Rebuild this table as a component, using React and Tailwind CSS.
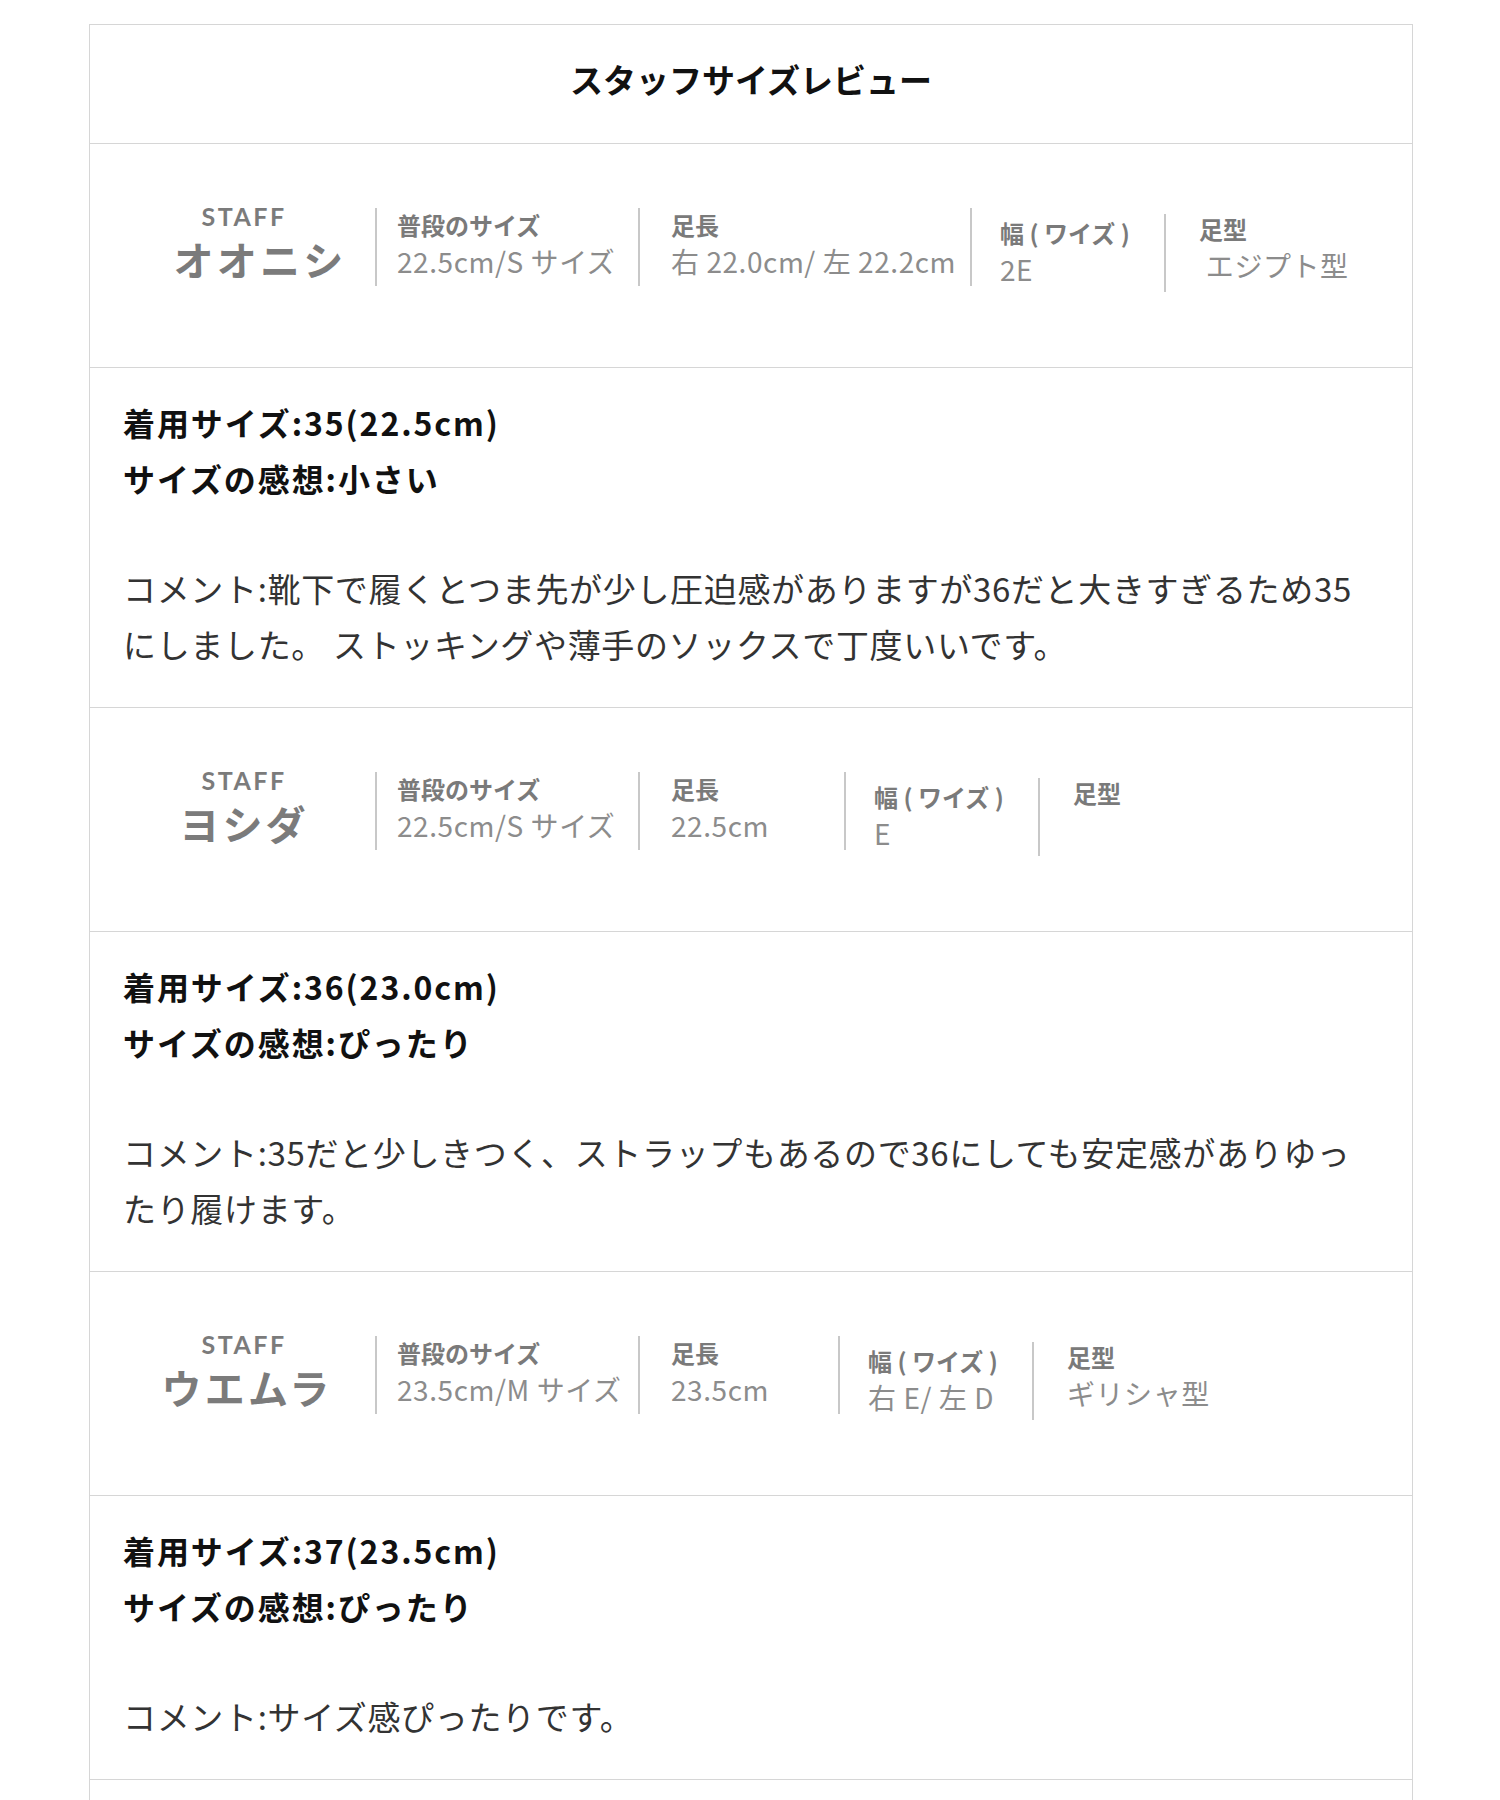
import React from 'react';

const font = { fontFamily: '"Noto Sans CJK JP", "Noto Sans", sans-serif' };

const reviews = [
  {
    name: 'オオニシ',
    nameShift: 'ml-[32px]',
    usual: '22.5cm/S サイズ',
    length: '右 22.0cm/ 左 22.2cm',
    lengthWidth: 'w-[332px]',
    width: '2E',
    shape: ' エジプト型',
    wear: '着用サイズ:35(22.5cm)',
    feel: 'サイズの感想:小さい',
    comment: 'コメント:靴下で履くとつま先が少し圧迫感がありますが36だと大きすぎるため35にしました。 ストッキングや薄手のソックスで丁度いいです。',
  },
  {
    name: 'ヨシダ',
    nameShift: '',
    usual: '22.5cm/S サイズ',
    length: '22.5cm',
    lengthWidth: 'w-[206px]',
    width: 'E',
    shape: '',
    wear: '着用サイズ:36(23.0cm)',
    feel: 'サイズの感想:ぴったり',
    comment: 'コメント:35だと少しきつく、ストラップもあるので36にしても安定感がありゆったり履けます。',
  },
  {
    name: 'ウエムラ',
    nameShift: 'ml-[6px]',
    usual: '23.5cm/M サイズ',
    length: '23.5cm',
    lengthWidth: 'w-[200px]',
    width: '右 E/ 左 D',
    shape: 'ギリシャ型',
    wear: '着用サイズ:37(23.5cm)',
    feel: 'サイズの感想:ぴったり',
    comment: 'コメント:サイズ感ぴったりです。',
  },
];

function Cell({ label, value, className, textClass }) {
  return (
    <div className={`h-[78px] border-l-2 border-[#c8c8c8] shrink-0 ${className}`}>
      <div className={textClass}>
        <div className="text-[24px] leading-[30px] font-bold text-[#7a7a7a] whitespace-nowrap">{label}</div>
        <div className="text-[28px] leading-[36px] mt-[3px] tracking-[0.02em] text-[#8c8c8c] whitespace-pre">{value}</div>
      </div>
    </div>
  );
}

function StaffRow({ r }) {
  return (
    <div className="flex items-start h-[224px] border-b border-[#d6d6d6]">
      <div className="w-[285px] shrink-0 pl-[23px] pt-[57px] flex flex-col items-center text-[#7b7b7b]">
        <div className="text-[25px] leading-[30px] font-bold tracking-[0.1em] font-['Lato',sans-serif]">STAFF</div>
        <div className={`text-[40px] leading-[44px] mt-[6px] font-bold tracking-[0.08em] ${r.nameShift}`}>{r.name}</div>
      </div>
      <Cell label="普段のサイズ" value={r.usual} className="w-[263px] mt-[64px] pl-[20px]" textClass="pt-[2px]" />
      <Cell label="足長" value={r.length} className={`${r.lengthWidth} mt-[64px] pl-[31px]`} textClass="pt-[2px]" />
      <Cell label="幅 ( ワイズ )" value={r.width} className="w-[194px] mt-[64px] pl-[28px]" textClass="pt-[10px]" />
      <Cell label="足型" value={r.shape} className="mt-[70px] pl-[33px]" textClass="pt-0" />
    </div>
  );
}

function CommentRow({ r }) {
  return (
    <div className="pl-[33px] pr-[44px] pt-[26px] pb-[35px] border-b border-[#d6d6d6]">
      <div className="text-[32px] leading-[56px] font-bold tracking-[0.06em] text-[#111]">{r.wear}</div>
      <div className="text-[32px] leading-[56px] font-bold tracking-[0.06em] text-[#111]">{r.feel}</div>
      <p className="mt-[54px] text-[33px] leading-[56px] tracking-[0.02em] text-[#333]">{r.comment}</p>
    </div>
  );
}

export default function App() {
  return (
    <div className="min-h-screen bg-white pt-[24px]" style={font}>
      <div className="ml-[89px] w-[1324px] border-x border-t border-[#d6d6d6]">
        <div className="pt-[32px] pb-[42px] border-b border-[#d6d6d6] text-center">
          <h2 className="text-[33px] leading-[44px] font-bold text-[#111]">スタッフサイズレビュー</h2>
        </div>
        {reviews.map((r) => (
          <React.Fragment key={r.name}>
            <StaffRow r={r} />
            <CommentRow r={r} />
          </React.Fragment>
        ))}
        <div className="h-[80px]" />
      </div>
    </div>
  );
}
